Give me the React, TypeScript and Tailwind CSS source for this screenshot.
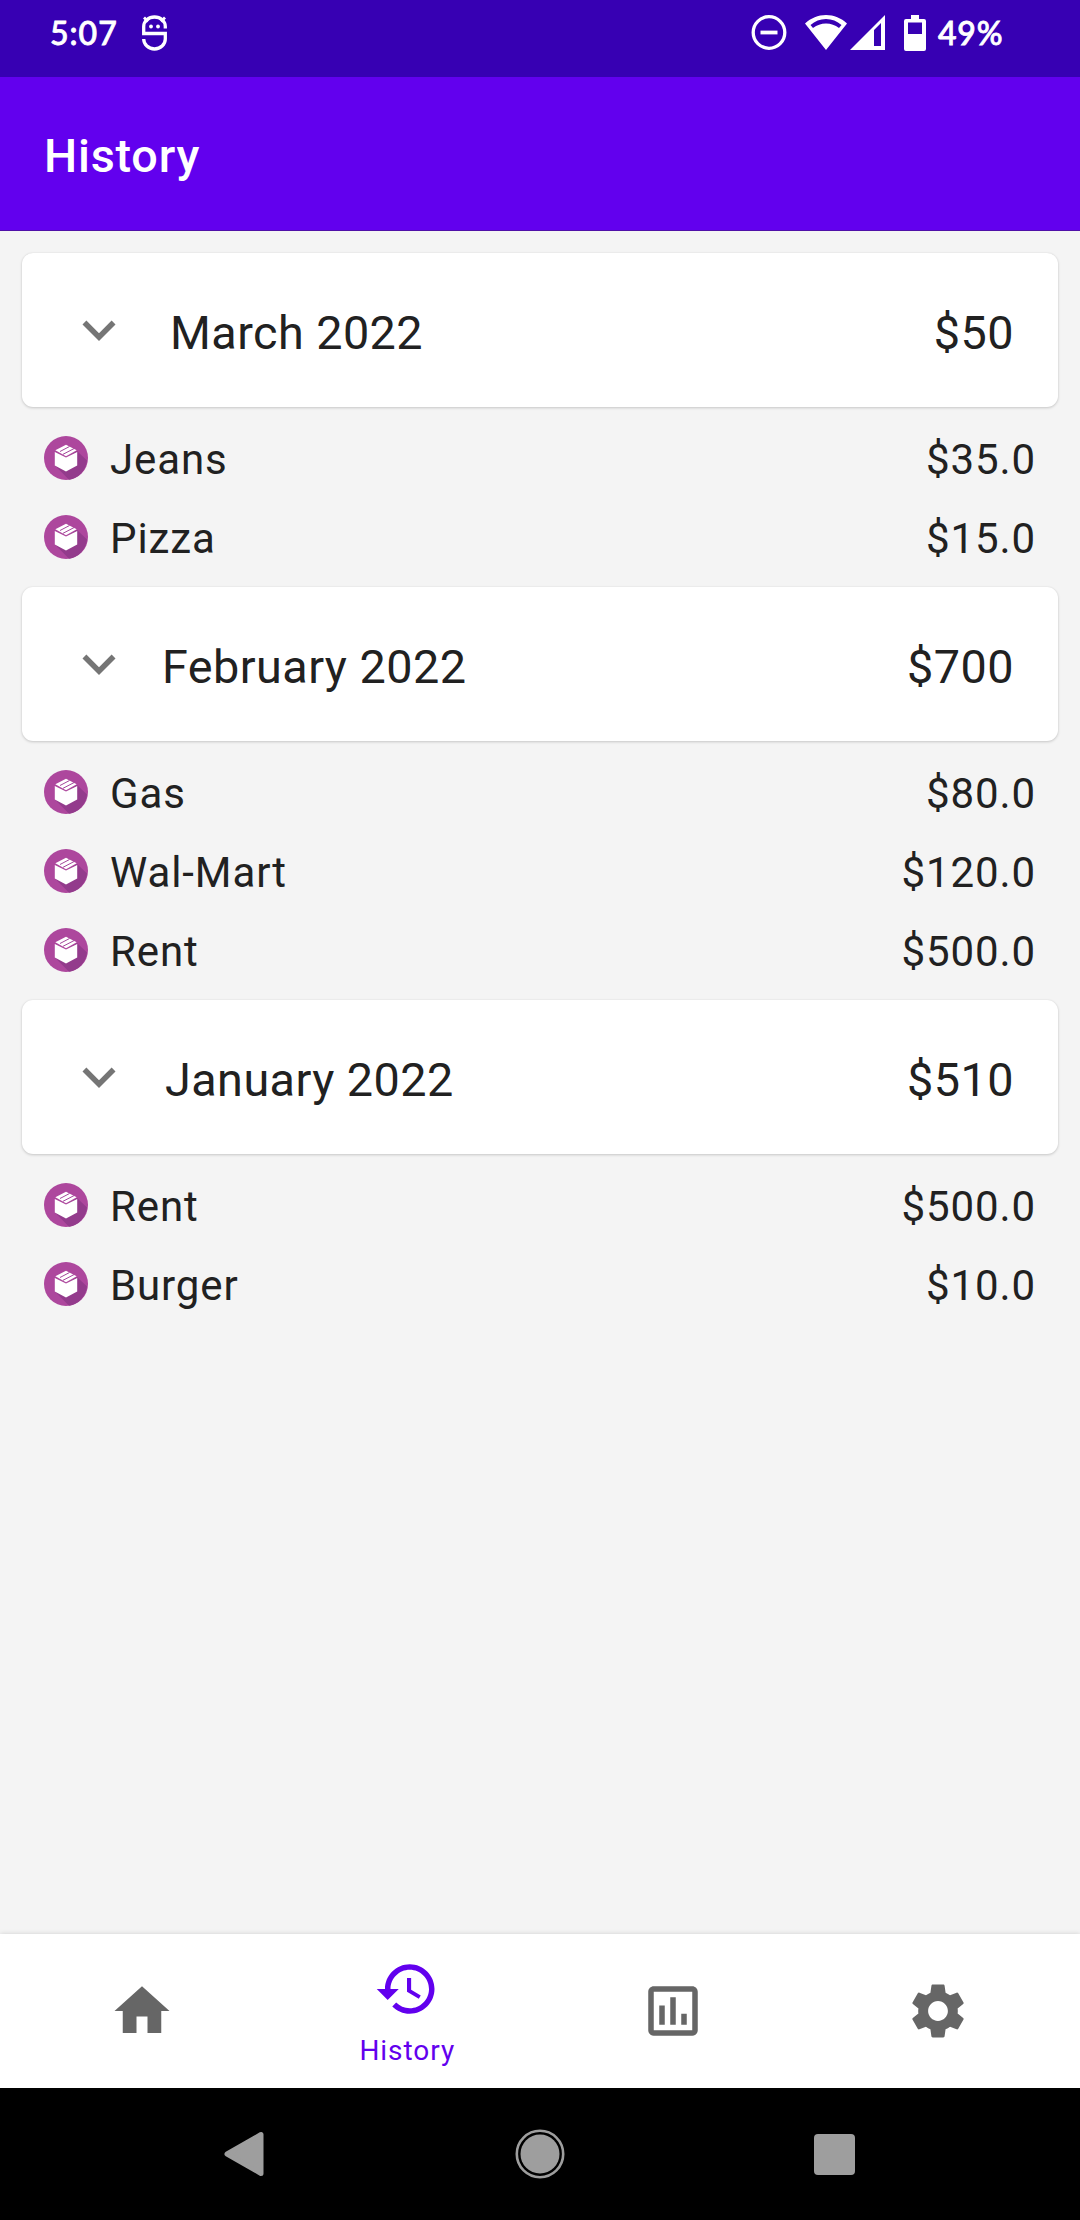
import React from "react";

type Entry = { name: string; amount: string };
type Month = { title: string; total: string; indent: string; entries: Entry[] };

const months: Month[] = [
  {
    title: "March 2022",
    total: "$50",
    indent: "ml-[5px]",
    entries: [
      { name: "Jeans", amount: "$35.0" },
      { name: "Pizza", amount: "$15.0" },
    ],
  },
  {
    title: "February 2022",
    total: "$700",
    indent: "-ml-[3px]",
    entries: [
      { name: "Gas", amount: "$80.0" },
      { name: "Wal-Mart", amount: "$120.0" },
      { name: "Rent", amount: "$500.0" },
    ],
  },
  {
    title: "January 2022",
    total: "$510",
    indent: "ml-0",
    entries: [
      { name: "Rent", amount: "$500.0" },
      { name: "Burger", amount: "$10.0" },
    ],
  },
];

function StatusBar() {
  return (
    <div className="flex h-[77px] items-start bg-[#3700b3] pl-[50px] pr-[77px] pt-[14px] text-white">
      <span className="h-[38px] w-[92px] font-['Lato'] text-[32px] font-medium leading-[38px] tracking-[1px] [-webkit-text-stroke:0.8px_white]">5:07</span>
      <svg className="h-[37px] w-[25px]" viewBox="0 0 25 37" fill="none" stroke="currentColor" strokeWidth="3.300">
        <path d="M23.300 14.500V12.500A10.800 9.500 0 0 0 1.700 12.500V19.500H23.300V25A10.800 10 0 0 1 1.700 25" />
        <path d="M2 3.500l4 4M23 3.500l-4 4" strokeWidth="2.800" />
        <circle cx="9" cy="12.500" r="1.900" fill="currentColor" stroke="none" />
        <circle cx="16" cy="12.500" r="1.900" fill="currentColor" stroke="none" />
      </svg>
      <div className="ml-auto flex">
        <svg className="h-[37px] w-[36px]" viewBox="0 0 36 37" fill="none" stroke="currentColor">
          <circle cx="18" cy="18.500" r="15.800" strokeWidth="3.300" />
          <path d="M9.500 18.500h17" strokeWidth="3.800" />
        </svg>
        <svg className="ml-[18px] h-[37px] w-[42px]" viewBox="0 0 42 37" fill="currentColor">
          <path fillRule="evenodd" d="M0 9.500C6 4 13 1 21 1s15 3 21 8.500L21 36zM5.500 11l2.500 3C12 11 16 9.500 21 9.500S30 11 34 14l2.500-3C32 7 27 5 21 5S10 7 5.500 11z" />
        </svg>
        <svg className="ml-[3px] h-[37px] w-[35px]" viewBox="0 0 35 37" fill="currentColor">
          <path fillRule="evenodd" d="M0 36L35 1v35zM24 16v16h7V9z" />
        </svg>
        <svg className="ml-[19px] h-[37px] w-[22px]" viewBox="0 0 22 37" fill="currentColor">
          <path fillRule="evenodd" d="M7 1h8v4h5a2 2 0 0 1 2 2v28a2 2 0 0 1-2 2H2a2 2 0 0 1-2-2V7a2 2 0 0 1 2-2h5zM4 8.500V20h14V8.500z" />
        </svg>
        <span className="ml-[12px] h-[38px] w-[65px] whitespace-nowrap font-['Lato'] text-[32px] font-medium leading-[38px] tracking-[0.8px] [-webkit-text-stroke:0.8px_white]">49%</span>
      </div>
    </div>
  );
}

function BoxIcon() {
  return (
    <svg className="size-[44px]" viewBox="0 0 44 44">
      <circle cx="22" cy="22" r="22" fill="#ad479d" />
      <path d="M33 15L43 24.500A22 22 0 0 1 25 43.800L11 29.500z" fill="#933b8c" />
      <path d="M10.800 16L22 21.600L33.200 16V29.500L22 35.500L10.800 29.500z" fill="#fff" />
      <path d="M11.300 14.300L22 8.700L32.700 14.300L22 20.200z" fill="#fff" />
      <path d="M16 15.500L25.500 10.500M19 18.300L30 12.600" stroke="#a3459a" strokeWidth="1" />
    </svg>
  );
}

function MonthCard({ month }: { month: Month }) {
  return (
    <div className="flex h-[154px] items-center rounded-[11px] bg-white pl-[44px] pr-[44px] text-[46.75px] tracking-[0.45px] shadow-[0_1px_3px_rgba(0,0,0,0.18),0_0_2px_rgba(0,0,0,0.06)]">
      <svg className="mr-[33px] size-[66px]" viewBox="0 0 24 24" fill="#757575">
        <path d="M7.410 8.590L12 13.170l4.590-4.580L18 10l-6 6-6-6z" />
      </svg>
      <div className="flex flex-1 justify-between pt-[7px]">
        <span className={month.indent}>{month.title}</span>
        <span>{month.total}</span>
      </div>
    </div>
  );
}

function EntryRow({ entry }: { entry: Entry }) {
  return (
    <div className="flex h-[79px] items-center px-[22px] text-[42px] tracking-[0.9px]">
      <BoxIcon />
      <div className="ml-[22px] flex flex-1 justify-between pt-[3px]">
        <span>{entry.name}</span>
        <span>{entry.amount}</span>
      </div>
    </div>
  );
}

function NavIcon({ path }: { path: string }) {
  return (
    <svg className="size-[66px]" viewBox="0 0 24 24" fill="currentColor">
      <path d={path} />
    </svg>
  );
}

function BottomNav() {
  return (
    <nav className="z-10 grid h-[154px] grid-cols-4 bg-white px-[9px] text-[#666666] shadow-[0_0_5px_rgba(0,0,0,0.15)]">
      <div className="flex items-center justify-center">
        <NavIcon path="M10 20v-6h4v6h5v-8h3L12 3 2 12h3v8z" />
      </div>
      <div className="flex flex-col items-center pt-[22px] text-[#6200ee]">
        <NavIcon path="M13 3c-4.970 0-9 4.030-9 9H1l3.890 3.890.070.140L9 12H6c0-3.870 3.130-7 7-7s7 3.130 7 7-3.130 7-7 7c-1.930 0-3.680-.790-4.940-2.060l-1.420 1.420C8.270 19.990 10.510 21 13 21c4.970 0 9-4.030 9-9s-4.030-9-9-9zm-1 5v5l4.280 2.540.720-1.210-3.500-2.080V8H12z" />
        <span className="mt-[12px] text-[28px] leading-[33px] tracking-[0.94px]">History</span>
      </div>
      <div className="flex items-center justify-center">
        <NavIcon path="M9 17H7v-7h2v7zm4 0h-2V7h2v10zm4 0h-2v-4h2v4zm2 2H5V5h14v14zm0-16H5c-1.100 0-2 .900-2 2v14c0 1.100.900 2 2 2h14c1.100 0 2-.900 2-2V5c0-1.100-.900-2-2-2z" />
      </div>
      <div className="flex items-center justify-center">
        <NavIcon path="M19.140 12.940c.040-.300.060-.610.060-.940 0-.320-.020-.640-.070-.940l2.030-1.580c.180-.140.230-.410.120-.610l-1.920-3.320c-.120-.220-.370-.290-.590-.220l-2.390.960c-.500-.380-1.030-.700-1.620-.940l-.360-2.540c-.040-.240-.240-.410-.480-.410h-3.840c-.240 0-.430.170-.470.410l-.360 2.540c-.590.240-1.130.570-1.620.940l-2.390-.960c-.220-.080-.470 0-.590.220L2.740 8.870c-.120.210-.080.470.120.610l2.030 1.580c-.050.300-.090.630-.090.940s.020.640.070.940l-2.030 1.580c-.180.140-.230.410-.120.610l1.920 3.320c.120.220.370.290.590.220l2.390-.960c.500.380 1.030.700 1.620.940l.360 2.540c.050.240.240.410.480.410h3.840c.240 0 .440-.170.470-.410l.360-2.540c.590-.240 1.130-.560 1.620-.940l2.390.960c.220.080.470 0 .590-.220l1.920-3.320c.120-.220.070-.470-.120-.610l-2.010-1.580zM12 15.600c-1.980 0-3.600-1.620-3.600-3.600s1.620-3.600 3.600-3.600 3.600 1.620 3.600 3.600-1.620 3.600-3.600 3.600z" />
      </div>
    </nav>
  );
}

function SystemNav() {
  return (
    <div className="z-20 flex h-[132px] items-center justify-between bg-black pl-[223px] pr-[225px] text-[#9e9e9e]">
      <svg className="h-[46px] w-[43px]" viewBox="0 0 43 46" fill="currentColor" stroke="currentColor" strokeWidth="5" strokeLinejoin="round">
        <path d="M38 3.500v39L4 23z" />
      </svg>
      <svg className="size-[50px]" viewBox="0 0 50 50" fill="currentColor">
        <circle cx="25" cy="25" r="19.500" />
        <circle cx="25" cy="25" r="23.200" fill="none" stroke="currentColor" strokeWidth="2.600" />
      </svg>
      <div className="size-[41px] rounded-[4px] bg-[#9e9e9e]" />
    </div>
  );
}

export default function App() {
  return (
    <div className="flex h-[2220px] w-[1080px] flex-col overflow-hidden bg-[#f4f4f4] font-['Roboto',sans-serif] text-[#212121]">
      <StatusBar />
      <header className="flex h-[154px] items-center border-b border-[#4f10a8] bg-[#6200ee] px-[44px] pt-[5px] text-[46.75px] font-medium tracking-[0.8px] text-white">
        History
      </header>
      <main className="flex-1 px-[22px] pt-[22px]">
        {months.map((month) => (
          <section key={month.title}>
            <MonthCard month={month} />
            <div className="py-[11px]">
              {month.entries.map((entry) => (
                <EntryRow key={entry.name} entry={entry} />
              ))}
            </div>
          </section>
        ))}
      </main>
      <BottomNav />
      <SystemNav />
    </div>
  );
}
